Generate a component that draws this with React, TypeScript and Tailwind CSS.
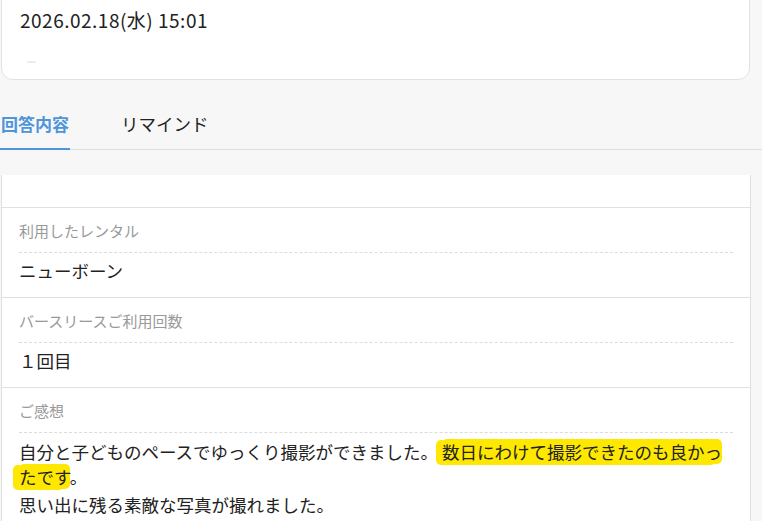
import React from "react";

const font = "font-['Meiryo','Noto_Sans_CJK_JP','Noto_Sans',sans-serif]";

function Row(props: { label: string; children: React.ReactNode }) {
  return (
    <div className="border-b border-[#e0e0e0] px-[17px] pt-[13px] pb-[14px]">
      <div className="border-b border-dashed border-[#dcdcdc] pb-[11px] text-[15px] leading-[20px] text-[#999]">
        {props.label}
      </div>
      <div className="pt-[6px] text-[17.5px] text-[#222]">{props.children}</div>
    </div>
  );
}

export default function App() {
  return (
    <div className={"h-screen overflow-hidden bg-[#f7f7f7] " + font}>
      <div className="w-[750px] pl-px">
        {/* date card, top is scrolled out of view */}
        <div className="-mt-[12px] rounded-[12px] border border-[#e2e2e2] bg-white px-[18px] pt-[19px] pb-[16px]">
          <div className="text-[19px] leading-[24px] tracking-[0.5px] text-[#222]">2026.02.18(水) 15:01</div>
          <div className="mt-[29px] ml-[7px] h-[2px] w-[9px] rounded-full bg-[#f1ece7]" />
        </div>
      </div>

      {/* tabs */}
      <div className="mt-[20px] flex border-b border-[#dedede]">
        <div className="-mb-px flex h-[50px] w-[70px] items-center justify-center border-b-2 border-[#4f95da] text-[17px] font-bold text-[#4f95da]">
          回答内容
        </div>
        <div className="ml-[51px] flex h-[49px] items-center text-[17.5px] text-[#222]">
          リマインド
        </div>
      </div>

      <div className="ml-px mt-[25px] w-[750px] border-x border-[#e0e0e0] bg-white">
        <div className="h-[33px] border-b border-[#e0e0e0]" />
        <Row label="利用したレンタル">
          <div className="leading-[24px]">ニューボーン</div>
        </Row>
        <Row label="バースリースご利用回数">
          <div className="leading-[24px]">１回目</div>
        </Row>
        <Row label="ご感想">
          <p className="leading-[25px]">
            自分と子どものペースでゆっくり撮影ができました。{" "}
            <span className="bg-[#ffe800] box-decoration-clone shadow-[-6px_1px_0_#ffe800] rounded-[5px]">
              数日にわけて撮影できたのも良かったです
            </span>
            。
          </p>
          <p className="mt-[3px] leading-[25px]">思い出に残る素敵な写真が撮れました。</p>
        </Row>
      </div>
    </div>
  );
}
